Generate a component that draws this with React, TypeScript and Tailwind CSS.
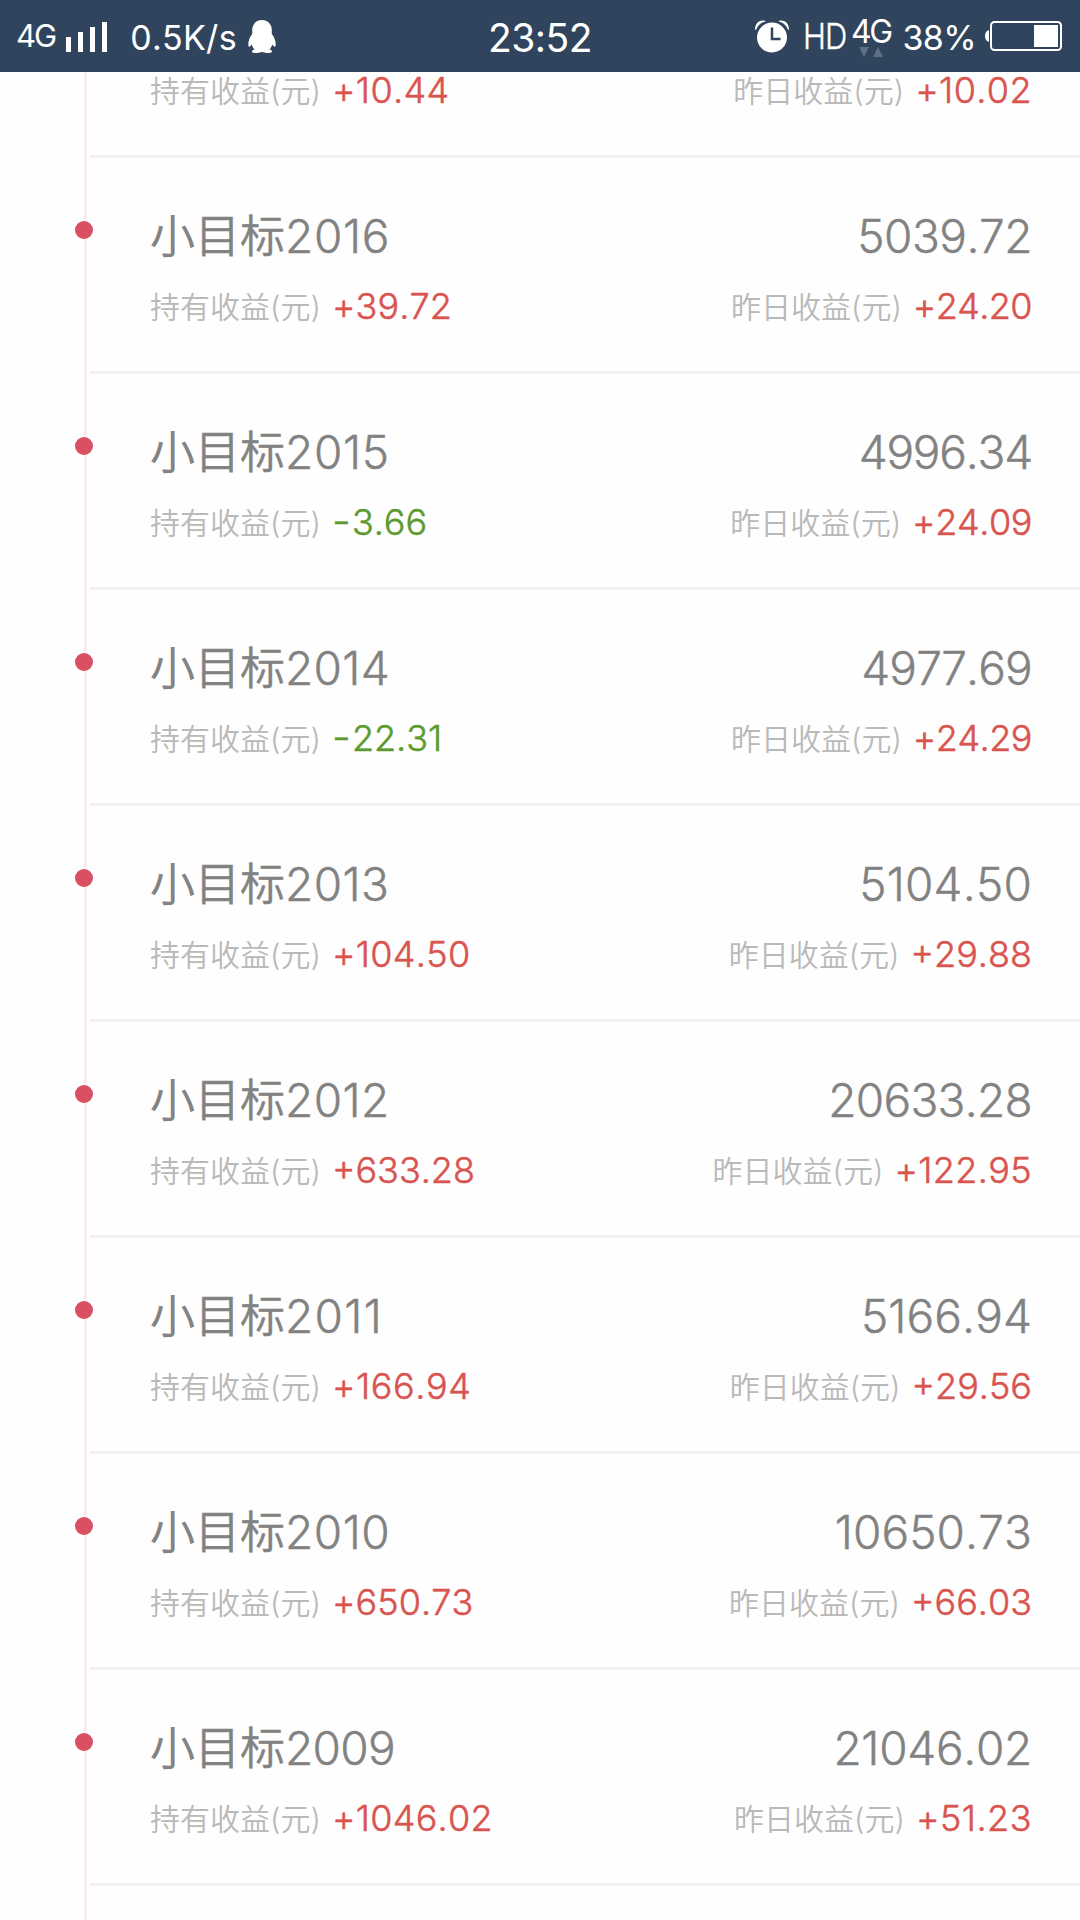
type Figure = { text: string; tracking: number };
type Goal = { year: Figure; amount: Figure; held: Figure; yesterday: Figure };

const fig = (text: string, tracking = 0): Figure => ({ text, tracking });

const goals: Goal[] = [
  { year: fig('2016', 0.7), amount: fig('5039.72', -0.5), held: fig('+39.72', 0.1), yesterday: fig('+24.20', -0.6) },
  { year: fig('2015', 0.7), amount: fig('4996.34', -1.2), held: fig('−3.66'), yesterday: fig('+24.09', -0.4) },
  { year: fig('2014', 0.3), amount: fig('4977.69', -0.8), held: fig('−22.31'), yesterday: fig('+24.29', -0.5) },
  { year: fig('2013', 0.4), amount: fig('5104.50', 0.2), held: fig('+104.50', 0.35), yesterday: fig('+29.88') },
  { year: fig('2012', 0.4), amount: fig('20633.28', -0.7), held: fig('+633.28'), yesterday: fig('+122.95', 0.35) },
  { year: fig('2011', 1.3), amount: fig('5166.94', 0.1), held: fig('+166.94', 0.6), yesterday: fig('+29.56') },
  { year: fig('2010', 0.5), amount: fig('10650.73', 0.1), held: fig('+650.73', 0.1), yesterday: fig('+66.03') },
  { year: fig('2009', -0.7), amount: fig('21046.02', -0.3), held: fig('+1046.02', 0.3), yesterday: fig('+51.23', 0.5) },
];

function Earning({ label, value }: { label: string; value: Figure }) {
  const gain = value.text.startsWith('+');
  return (
    <div className="flex items-baseline">
      <span className="relative -top-px text-[30px] leading-[44px] text-[#b9b9b9]">{label}(元)</span>
      <span
        className={`ml-[11px] text-[36px] leading-[44px] [-webkit-text-stroke:0.5px] ${gain ? 'text-[#d9534f]' : 'text-[#5c9a2e]'}`}
        style={{ letterSpacing: value.tracking }}
      >
        {gain ? value.text : (
          <>
            <span className="relative -top-[2px] inline-block w-[20px] origin-left scale-x-[0.8]">−</span>
            {value.text.slice(1)}
          </>
        )}
      </span>
    </div>
  );
}

function Earnings({ held, yesterday }: { held: Figure; yesterday: Figure }) {
  return (
    <div className="flex justify-between">
      <Earning label="持有收益" value={held} />
      <Earning label="昨日收益" value={yesterday} />
    </div>
  );
}

function Gutter({ dot }: { dot?: boolean }) {
  return (
    <div className="relative w-[90px] shrink-0 pl-[84px]">
      <div className="h-full w-[3px] bg-[#f9edf0]" />
      {dot && <div className="absolute left-[75px] top-[63px] size-[18px] rounded-full bg-[#db4f63]" />}
    </div>
  );
}

function GoalRow({ goal }: { goal: Goal }) {
  return (
    <li className="flex h-[216px]">
      <Gutter dot />
      <div className="flex-1 border-b-[3px] border-[#f1f1f1] pl-[60px] pr-[48px] pt-[45px] font-[350]">
        <div className="flex h-[66px] items-baseline justify-between text-[46px] leading-[66px] text-[#828282] [-webkit-text-stroke:0.4px]">
          <span>
            <span className="text-[45px]">小目标</span>
            <span style={{ letterSpacing: goal.year.tracking }}>{goal.year.text}</span>
          </span>
          <span style={{ letterSpacing: goal.amount.tracking }}>{goal.amount.text}</span>
        </div>
        <div className="pt-[15px]">
          <Earnings held={goal.held} yesterday={goal.yesterday} />
        </div>
      </div>
    </li>
  );
}

function StatusBar() {
  return (
    <header className="grid h-[72px] shrink-0 grid-cols-[1fr_auto_1fr] items-center bg-[#30445d] text-white">
      <div className="flex items-center pl-[16px] pt-px">
        <span className="text-[31px] tracking-[-2px]">4G</span>
        <div className="ml-[11px] flex h-[30px] items-end gap-[7px]">
          <i className="h-[15px] w-[5px] bg-white" />
          <i className="h-[20px] w-[5px] bg-white" />
          <i className="h-[25px] w-[5px] bg-white" />
          <i className="h-[30px] w-[5px] bg-white" />
        </div>
        <span className="ml-[23px] pt-[2px] text-[34px] tracking-[0.3px]">0.5K/s</span>
        <svg className="ml-[11px] h-[33px] w-[28px]" viewBox="0 0 28 33" fill="white">
          <path d="M14 0C8 0 4.2 4.5 4.2 10v4C2 17 .3 20.500.3 24c0 1.500.3 2.700.9 2.700.8 0 1.800-1.200 2.500-2.200.5 1.800 1.400 3.500 2.700 4.800-1.300.5-2.400 1.300-2.400 2.200 0 1.300 2.500 1.500 5 1.500 2.300 0 4-.5 5-1.200 1 .7 2.700 1.200 5 1.200 2.500 0 5-.2 5-1.500 0-.9-1.100-1.700-2.400-2.200 1.300-1.300 2.200-3 2.700-4.800.7 1 1.700 2.200 2.500 2.200.6 0 .9-1.200.9-2.700 0-3.500-1.700-7-3.900-10v-4C23.800 4.500 20 0 14 0z" />
        </svg>
      </div>
      <span className="pt-[4px] text-[39px] tracking-[-0.5px]">23:52</span>
      <div className="flex items-center justify-end pr-[18px]">
        <svg className="h-[33px] w-[34px]" viewBox="0 0 34 33" fill="white">
          <circle cx="17" cy="17.500" r="15" />
          <path d="M0 9.500C0 4 3.500 0 8.500.5c1 .1 1.700.4 2.300.8C6 2.500 2.500 5.500 1 10zM34 9.500C34 4 30.500 0 25.500.5c-1 .1-1.700.4-2.300.8C28 2.500 31.500 5.500 33 10z" />
          <path d="M17 7.500V19h8.500" fill="none" stroke="#30445d" strokeWidth="2.500" />
        </svg>
        <span className="ml-[14px] w-[44px] origin-left scale-x-[0.86] text-[36px] font-[350] tracking-[-1px] [-webkit-text-stroke:0.4px]">HD</span>
        <div className="ml-[4px] flex w-[39px] flex-col items-center">
          <span className="text-[32px] leading-[31px] tracking-[-2.5px]">4G</span>
          <svg className="h-[10px] w-[24px]" viewBox="0 0 24 10" fill="#5f7084">
            <path d="M0 0h10L5 10zM14 10h10L19 0z" />
          </svg>
        </div>
        <span className="ml-[12px] pt-[3px] text-[34px] tracking-[-0.6px]">38%</span>
        <svg className="ml-[9px] h-[30px] w-[77px]" viewBox="0 0 77 30" fill="white">
          <path d="M4 9v12c-2.500-.5-4-3-4-6s1.500-5.500 4-6z" />
          <rect x="6" y="1" width="70" height="28" rx="3.500" fill="none" stroke="white" strokeWidth="2" />
          <path d="M49 4h24v22H49z" />
        </svg>
      </div>
    </header>
  );
}

export default function App() {
  return (
    <div className="flex h-[1920px] w-[1080px] flex-col overflow-hidden bg-[#fefefe] font-['Inter','Noto_Sans_CJK_SC',sans-serif] [font-kerning:none]">
      <StatusBar />
      <div className="flex h-[86px] shrink-0">
        <Gutter />
        <div className="flex-1 border-b-[3px] border-[#f1f1f1] pl-[60px] pr-[48px] font-[350]">
          <div className="-mt-[4px]">
            <Earnings held={fig('+10.44', 0.4)} yesterday={fig('+10.02', 0.4)} />
          </div>
        </div>
      </div>
      <ul className="shrink-0">
        {goals.map((goal) => (
          <GoalRow key={goal.year.text} goal={goal} />
        ))}
      </ul>
      <div className="flex flex-1">
        <Gutter />
      </div>
    </div>
  );
}
